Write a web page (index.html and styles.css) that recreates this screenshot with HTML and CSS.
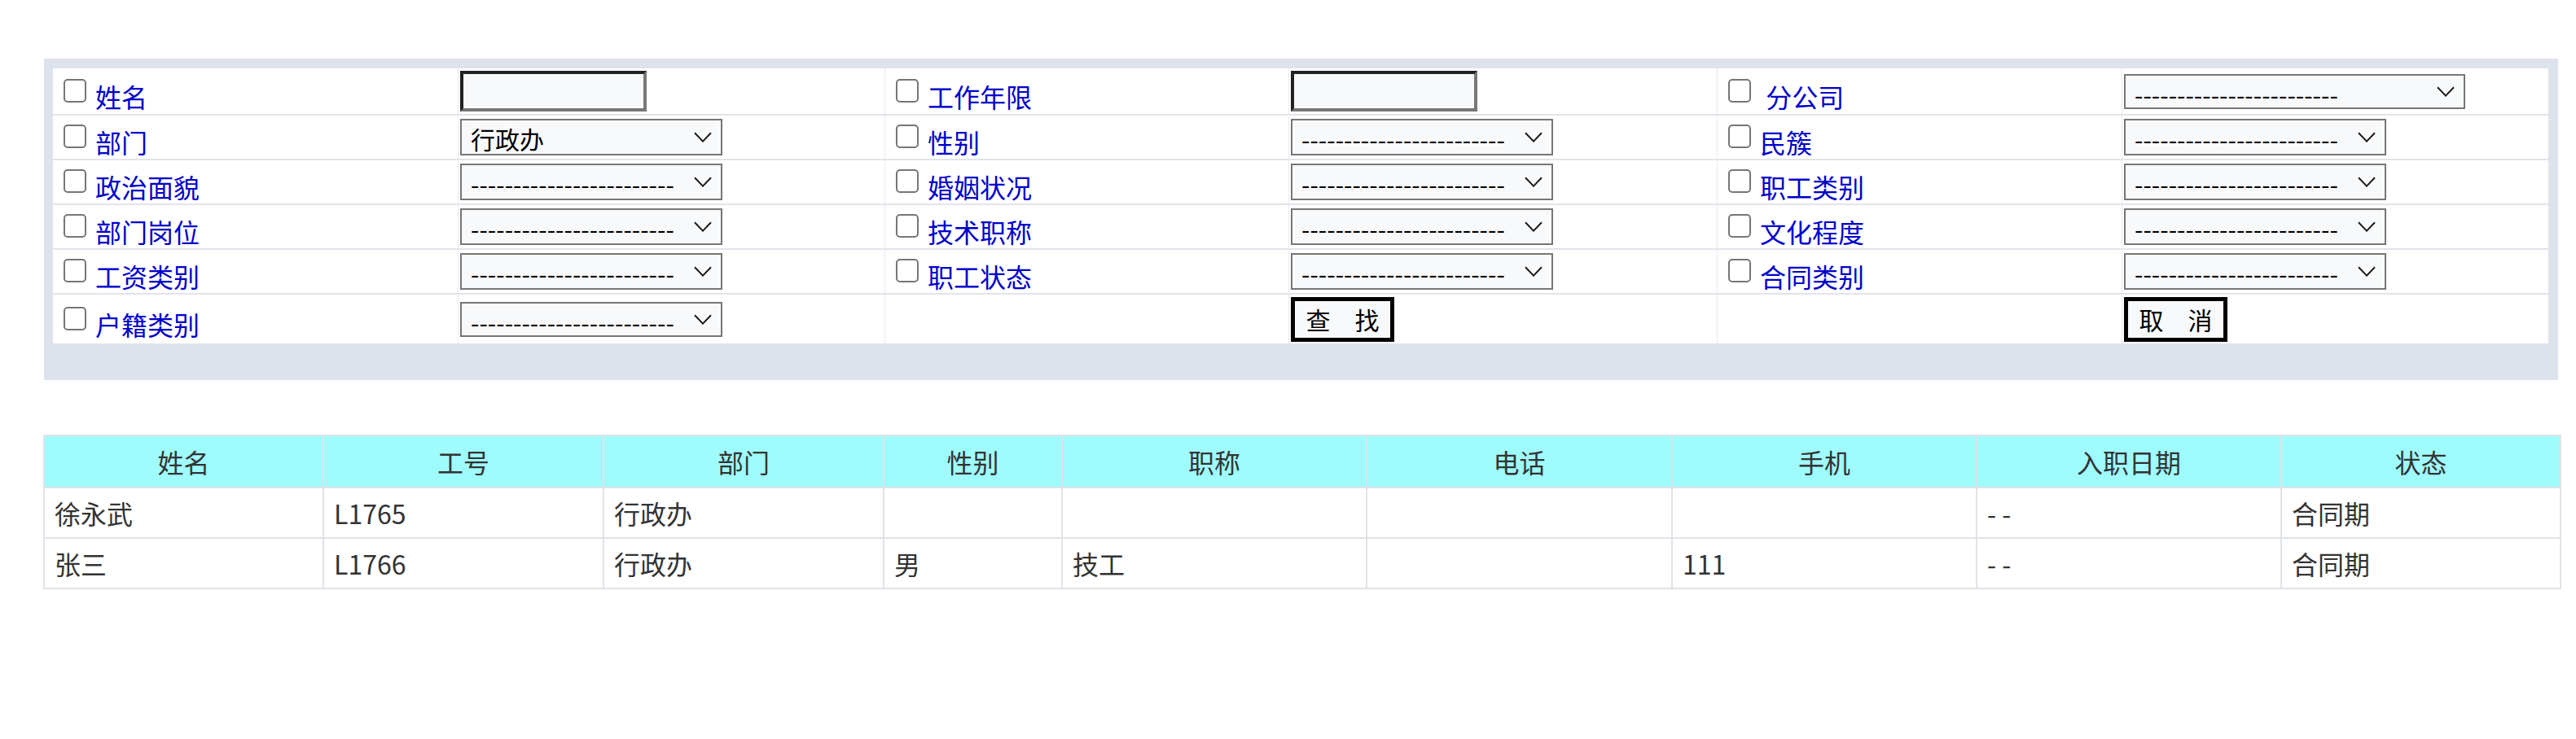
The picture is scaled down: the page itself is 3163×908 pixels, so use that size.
FILE: index.html
```html
<!DOCTYPE html>
<html lang="zh-CN">
<head>
<meta charset="utf-8">
<title>员工查询</title>
<link rel="stylesheet" href="styles.css">
</head>
<body>
<div class="page">
  <form class="search-box">
    <div class="search">
      <div class="cell lbl"><label class="chk"><input type="checkbox" class="cb"><span>姓名</span></label></div>
      <div class="cell ctl"><input type="text" class="txt"></div>
      <div class="cell lbl"><label class="chk"><input type="checkbox" class="cb"><span>工作年限</span></label></div>
      <div class="cell ctl"><input type="text" class="txt"></div>
      <div class="cell lbl"><label class="chk"><input type="checkbox" class="cb"><span>&nbsp;分公司</span></label></div>
      <div class="cell ctl"><span class="selbox wide"><select class="sel"><option>------------------------</option></select><svg class="chev" viewBox="0 0 11 6.5"><polyline points="0.5,0.6 5.5,5.8 10.5,0.6"/></svg></span></div>

      <div class="cell lbl"><label class="chk"><input type="checkbox" class="cb"><span>部门</span></label></div>
      <div class="cell ctl"><span class="selbox"><select class="sel"><option>行政办</option></select><svg class="chev" viewBox="0 0 11 6.5"><polyline points="0.5,0.6 5.5,5.8 10.5,0.6"/></svg></span></div>
      <div class="cell lbl"><label class="chk"><input type="checkbox" class="cb"><span>性别</span></label></div>
      <div class="cell ctl"><span class="selbox"><select class="sel"><option>------------------------</option></select><svg class="chev" viewBox="0 0 11 6.5"><polyline points="0.5,0.6 5.5,5.8 10.5,0.6"/></svg></span></div>
      <div class="cell lbl"><label class="chk"><input type="checkbox" class="cb"><span>民簇</span></label></div>
      <div class="cell ctl"><span class="selbox"><select class="sel"><option>------------------------</option></select><svg class="chev" viewBox="0 0 11 6.5"><polyline points="0.5,0.6 5.5,5.8 10.5,0.6"/></svg></span></div>

      <div class="cell lbl"><label class="chk"><input type="checkbox" class="cb"><span>政治面貌</span></label></div>
      <div class="cell ctl"><span class="selbox"><select class="sel"><option>------------------------</option></select><svg class="chev" viewBox="0 0 11 6.5"><polyline points="0.5,0.6 5.5,5.8 10.5,0.6"/></svg></span></div>
      <div class="cell lbl"><label class="chk"><input type="checkbox" class="cb"><span>婚姻状况</span></label></div>
      <div class="cell ctl"><span class="selbox"><select class="sel"><option>------------------------</option></select><svg class="chev" viewBox="0 0 11 6.5"><polyline points="0.5,0.6 5.5,5.8 10.5,0.6"/></svg></span></div>
      <div class="cell lbl"><label class="chk"><input type="checkbox" class="cb"><span>职工类别</span></label></div>
      <div class="cell ctl"><span class="selbox"><select class="sel"><option>------------------------</option></select><svg class="chev" viewBox="0 0 11 6.5"><polyline points="0.5,0.6 5.5,5.8 10.5,0.6"/></svg></span></div>

      <div class="cell lbl"><label class="chk"><input type="checkbox" class="cb"><span>部门岗位</span></label></div>
      <div class="cell ctl"><span class="selbox"><select class="sel"><option>------------------------</option></select><svg class="chev" viewBox="0 0 11 6.5"><polyline points="0.5,0.6 5.5,5.8 10.5,0.6"/></svg></span></div>
      <div class="cell lbl"><label class="chk"><input type="checkbox" class="cb"><span>技术职称</span></label></div>
      <div class="cell ctl"><span class="selbox"><select class="sel"><option>------------------------</option></select><svg class="chev" viewBox="0 0 11 6.5"><polyline points="0.5,0.6 5.5,5.8 10.5,0.6"/></svg></span></div>
      <div class="cell lbl"><label class="chk"><input type="checkbox" class="cb"><span>文化程度</span></label></div>
      <div class="cell ctl"><span class="selbox"><select class="sel"><option>------------------------</option></select><svg class="chev" viewBox="0 0 11 6.5"><polyline points="0.5,0.6 5.5,5.8 10.5,0.6"/></svg></span></div>

      <div class="cell lbl"><label class="chk"><input type="checkbox" class="cb"><span>工资类别</span></label></div>
      <div class="cell ctl"><span class="selbox"><select class="sel"><option>------------------------</option></select><svg class="chev" viewBox="0 0 11 6.5"><polyline points="0.5,0.6 5.5,5.8 10.5,0.6"/></svg></span></div>
      <div class="cell lbl"><label class="chk"><input type="checkbox" class="cb"><span>职工状态</span></label></div>
      <div class="cell ctl"><span class="selbox"><select class="sel"><option>------------------------</option></select><svg class="chev" viewBox="0 0 11 6.5"><polyline points="0.5,0.6 5.5,5.8 10.5,0.6"/></svg></span></div>
      <div class="cell lbl"><label class="chk"><input type="checkbox" class="cb"><span>合同类别</span></label></div>
      <div class="cell ctl"><span class="selbox"><select class="sel"><option>------------------------</option></select><svg class="chev" viewBox="0 0 11 6.5"><polyline points="0.5,0.6 5.5,5.8 10.5,0.6"/></svg></span></div>

      <div class="cell lbl"><label class="chk"><input type="checkbox" class="cb"><span>户籍类别</span></label></div>
      <div class="cell ctl"><span class="selbox short"><select class="sel"><option>------------------------</option></select><svg class="chev" viewBox="0 0 11 6.5"><polyline points="0.5,0.6 5.5,5.8 10.5,0.6"/></svg></span></div>
      <div class="cell lbl"></div>
      <div class="cell ctl"><button type="button" class="btn">查　找</button></div>
      <div class="cell lbl"></div>
      <div class="cell ctl"><button type="button" class="btn">取　消</button></div>
    </div>
  </form>

  <table class="list">
    <colgroup>
      <col class="k1"><col class="k2"><col class="k3"><col class="k4"><col class="k5"><col class="k6"><col class="k7"><col class="k8"><col class="k9">
    </colgroup>
    <thead>
      <tr><th>姓名</th><th>工号</th><th>部门</th><th>性别</th><th>职称</th><th>电话</th><th>手机</th><th>入职日期</th><th>状态</th></tr>
    </thead>
    <tbody>
      <tr><td>徐永武</td><td>L1765</td><td>行政办</td><td></td><td></td><td></td><td></td><td>- -</td><td>合同期</td></tr>
      <tr><td>张三</td><td>L1766</td><td>行政办</td><td>男</td><td>技工</td><td></td><td>111</td><td>- -</td><td>合同期</td></tr>
    </tbody>
  </table>
</div>
</body>
</html>
```

FILE: styles.css
```css
html, body {
  margin: 0;
  padding: 0;
  background: #ffffff;
}

body {
  font-family: "Noto Sans CJK SC", "Microsoft YaHei", sans-serif;
}

.page {
  zoom: 2;
  padding-top: 36px;
  padding-left: 27px;
}

/* ---------- search form ---------- */

.search-box {
  display: block;
  margin: 0;
  width: 1543.5px;
  box-sizing: border-box;
  padding: 6px 6px 22.5px 5.5px;
  background: #dce3ec;
}

.search {
  display: grid;
  grid-template-columns: 248.5px 262px 248px 263px 248.5px 262px;
  grid-template-rows: 29px repeat(4, 27.5px) 30px;
  width: 1532px;
  background: #ffffff;
  font-size: 16px;
}

.cell {
  box-sizing: border-box;
  display: flex;
  align-items: center;
  min-width: 0;
  border-bottom: 1px solid #e1e4ea;
  border-left: 0.5px solid #e8eaee;
}

.cell:nth-child(6n+1) {
  border-left: 0;
}

.cell:nth-last-child(-n+6) {
  border-bottom: 0;
}

.lbl {
  padding-left: 3px;
  color: #0000cc;
  white-space: nowrap;
}

.chk {
  display: flex;
  align-items: flex-end;
  height: 26.5px;
  line-height: 21px;
}

.cb {
  appearance: none;
  -webkit-appearance: none;
  flex: none;
  box-sizing: border-box;
  width: 14px;
  height: 14.5px;
  margin: 0 5.5px 6.5px 3.5px;
  border: 1px solid #767676;
  border-radius: 2.5px;
  background: #ffffff;
}

.ctl {
  padding-left: 1px;
}

.txt {
  display: block;
  width: 114.5px;
  height: 25px;
  box-sizing: border-box;
  border: 2px solid;
  border-color: #222222 #777777 #777777 #222222;
  background: #f8f9fb;
  padding: 1px 2px;
  margin: 0;
}

.selbox {
  position: relative;
  display: block;
  width: 161px;
  height: 22.5px;
}

.selbox.wide {
  width: 209.5px;
  height: 21.5px;
}

.selbox.short {
  height: 21.5px;
}

.sel {
  appearance: none;
  -webkit-appearance: none;
  display: block;
  width: 100%;
  height: 100%;
  box-sizing: border-box;
  border: 1px solid #767676;
  border-radius: 0;
  background-color: #f8f9fb;
  font: 15px "Noto Sans CJK SC", "Microsoft YaHei", sans-serif;
  color: #000000;
  padding: 0 0 0 5.5px;
  margin: 0;
}

.chev {
  position: absolute;
  right: 6.5px;
  top: 50%;
  width: 11px;
  height: 6.5px;
  margin-top: -3.25px;
  fill: none;
  stroke: #1a1a1a;
  stroke-width: 1;
  pointer-events: none;
}

.btn {
  display: block;
  width: 63.5px;
  height: 27.5px;
  box-sizing: border-box;
  border: 2.5px solid #000000;
  background: #f8f9fb;
  font: 15px "Noto Sans CJK SC", "Microsoft YaHei", sans-serif;
  color: #000000;
  padding: 0;
  margin: 0;
}

/* ---------- result list ---------- */

.list {
  margin-top: 33.5px;
  margin-left: -0.5px;
  width: 1544.5px;
  table-layout: fixed;
  border-collapse: collapse;
  font-size: 16px;
  color: #333333;
}

.k1 { width: 171.5px; }
.k2 { width: 172px; }
.k3 { width: 172px; }
.k4 { width: 109.5px; }
.k5 { width: 187px; }
.k6 { width: 187.5px; }
.k7 { width: 187px; }
.k8 { width: 187px; }
.k9 { width: 171.5px; }

.list th,
.list td {
  border: 1px solid #dfe3e8;
}

.list th {
  background: #9ffcfd;
  font-weight: normal;
  text-align: center;
  height: 31px;
  padding: 0;
}

.list td {
  height: 30px;
  padding: 0 6px;
  text-align: left;
}
```
